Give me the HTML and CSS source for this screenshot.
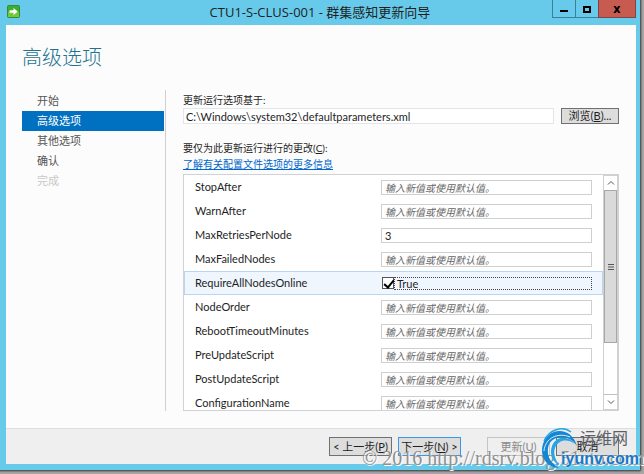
FILE: index.html
```html
<!DOCTYPE html>
<html lang="zh-CN">
<head>
  <meta charset="utf-8">
  <title>CTU1-S-CLUS-001 - 群集感知更新向导</title>
  <link rel="stylesheet" href="styles.css">
</head>
<body>
  <div class="window">
    <header class="titlebar">
      <svg class="app-icon" viewBox="0 0 13 13" aria-hidden="true">
        <rect x="0.5" y="0.5" width="12" height="12" rx="1" fill="#3fae2a" stroke="#2f8f3a"/>
        <rect x="1" y="7" width="11" height="5" fill="#74c83c"/>
        <path d="M2.5 5.2h4V3l4.3 3.5L6.5 10V7.8h-4z" fill="#fff"/>
      </svg>
      <div class="title">CTU1-S-CLUS-001 - 群集感知更新向导</div>
      <div class="caption-buttons">
        <button class="caption" aria-label="最小化"><svg viewBox="0 0 10 10"><path d="M1 6h8v2H1z"/></svg></button>
        <button class="caption" aria-label="最大化"><svg viewBox="0 0 10 10"><path d="M1 2h8v7H1zM3 4v3h4V4z" fill-rule="evenodd"/></svg></button>
        <button class="caption close" aria-label="关闭"><svg viewBox="0 0 10 10"><path d="M1.5 2h2.3L5 3.9 6.2 2h2.3L6.2 5.4 8.6 9H6.2L5 7 3.8 9H1.4l2.4-3.6z"/></svg></button>
      </div>
    </header>

    <div class="client">
      <main class="page">
        <h1>高级选项</h1>
        <div class="columns">
          <nav class="steps">
            <div class="step">开始</div>
            <div class="step active">高级选项</div>
            <div class="step">其他选项</div>
            <div class="step">确认</div>
            <div class="step disabled">完成</div>
          </nav>

          <section class="options">
            <label class="caption-text" for="base">更新运行选项基于:</label>
            <div class="path-row">
              <input class="path" id="base" type="text" value="C:\Windows\system32\defaultparameters.xml" readonly>
              <button class="btn browse">浏览(<u>B</u>)...</button>
            </div>
            <div class="caption-text">要仅为此更新运行进行的更改(<u>C</u>):</div>
            <a class="more" href="#">了解有关配置文件选项的更多信息</a>

            <div class="list">
              <div class="rows">
                <div class="row">
                  <label for="o1">StopAfter</label>
                  <input class="field" id="o1" type="text" placeholder="输入新值或使用默认值。">
                </div>
                <div class="row">
                  <label for="o2">WarnAfter</label>
                  <input class="field" id="o2" type="text" placeholder="输入新值或使用默认值。">
                </div>
                <div class="row">
                  <label for="o3">MaxRetriesPerNode</label>
                  <input class="field number" id="o3" type="text" value="3">
                </div>
                <div class="row">
                  <label for="o4">MaxFailedNodes</label>
                  <input class="field" id="o4" type="text" placeholder="输入新值或使用默认值。">
                </div>
                <div class="row selected">
                  <label for="o5">RequireAllNodesOnline</label>
                  <div class="check">
                    <input class="box" id="o5" type="checkbox" checked>
                    <label class="check-text" for="o5">True</label>
                  </div>
                </div>
                <div class="row">
                  <label for="o6">NodeOrder</label>
                  <input class="field" id="o6" type="text" placeholder="输入新值或使用默认值。">
                </div>
                <div class="row">
                  <label for="o7">RebootTimeoutMinutes</label>
                  <input class="field" id="o7" type="text" placeholder="输入新值或使用默认值。">
                </div>
                <div class="row">
                  <label for="o8">PreUpdateScript</label>
                  <input class="field" id="o8" type="text" placeholder="输入新值或使用默认值。">
                </div>
                <div class="row">
                  <label for="o9">PostUpdateScript</label>
                  <input class="field" id="o9" type="text" placeholder="输入新值或使用默认值。">
                </div>
                <div class="row">
                  <label for="o10">ConfigurationName</label>
                  <input class="field" id="o10" type="text" placeholder="输入新值或使用默认值。">
                </div>
              </div>
              <div class="scrollbar">
                <div class="arrow"><svg viewBox="0 0 8 8"><path d="M1 5.5L4 2.5l3 3"/></svg></div>
                <div class="track">
                  <div class="thumb"><svg viewBox="0 0 8 8"><path d="M1 1.5h6M1 4h6M1 6.5h6"/></svg></div>
                </div>
                <div class="arrow"><svg viewBox="0 0 8 8"><path d="M1 2.5l3 3 3-3"/></svg></div>
              </div>
            </div>
          </section>
        </div>
      </main>

      <footer class="footer">
        <button class="btn">&lt; 上一步(<u>P</u>)</button>
        <button class="btn next">下一步(<u>N</u>) &gt;</button>
        <button class="btn update" disabled>更新(<u>U</u>)</button>
        <button class="btn">取消</button>
      </footer>
    </div>
  </div>

  <div class="watermark">© 2016 http://rdsrv.blog.51cto.com</div>
  <div class="site-logo">
    <svg class="swirl" viewBox="0 0 38 42" aria-hidden="true">
      <path d="M36 19C32 6 22 2 13 5C3 9-1 20 2 30C5 37 11 41 18 41C9 36 6 29 7 21C9 9 26 5 36 19z" fill="#1387d3"/>
      <path d="M34 17C27 8 15 9 11 19C8 27 12 35 18 38C14 32 12 26 14 21C17 13 26 11 34 17z" fill="#26a5e6"/>
      <path d="M3 14C8 3 21-2 30 5" fill="none" stroke="#26a5e6" stroke-width="1.5"/>
      <path d="M3 24C4 11 17 5 29 10" fill="none" stroke="#d8f0fb"/>
    </svg>
    <span class="site-name">运维网</span>
    <span class="site-domain">iyunv.com</span>
  </div>
</body>
</html>
```
FILE: styles.css
```css
* {
  box-sizing: border-box;
}
body {
  margin: 0;
  height: 100vh;
  padding: 0 4px 4px 0;
  overflow: hidden;
  position: relative;
  background: #a8a8a8;
  font-family: Lato, "Noto Sans CJK SC", sans-serif;
  font-size: 11px;
  line-height: 16px;
  color: #1e1e1e;
}
button, input {
  font-family: inherit;
  font-size: inherit;
  line-height: inherit;
  color: inherit;
  margin: 0;
}
.window {
  height: 100%;
  display: flex;
  flex-direction: column;
  padding: 0 4px 6px 6px;
  background: #67caea;
  box-shadow: 0 0 2px 1px #333;
}
.titlebar {
  display: flex;
  align-items: flex-start;
  height: 25px;
  flex: none;
}
.app-icon {
  width: 13px;
  height: 13px;
  margin: 5px 0 0 1px;
}
.title {
  flex: 1;
  padding-left: 68px;
  text-align: center;
  font-family: "Open Sans", "Noto Sans CJK SC", sans-serif;
  font-size: 13px;
  line-height: 24px;
}
.caption-buttons {
  display: flex;
}
.caption {
  width: 23px;
  height: 18px;
  padding: 0;
  display: flex;
  align-items: center;
  justify-content: center;
  background: none;
  border: 1px solid #3c7f98;
  border-top: none;
  border-right: none;
}
.caption svg {
  width: 10px;
  height: 10px;
}
.caption.close {
  width: 38px;
  background: #c75b50;
  border-color: #7d4544;
  border-right: 1px solid #7d4544;
}
.client {
  flex: 1;
  min-height: 0;
  display: flex;
  flex-direction: column;
  background: #fcfcfc;
}
.page {
  flex: 1;
  min-height: 0;
  display: flex;
  flex-direction: column;
  padding: 18px 17px 17px 16px;
}
h1 {
  margin: 0 0 19px;
  font-size: 20px;
  line-height: 28px;
  font-weight: 300;
  color: #1f7391;
}
.columns {
  flex: 1;
  min-height: 0;
  display: flex;
}
.steps {
  width: 144px;
  flex: none;
  padding: 1px 1px 0 0;
  border-right: 1px solid #d0d0d0;
}
.step {
  height: 20px;
  padding-left: 15px;
  line-height: 20px;
  color: #555;
}
.step.active {
  background: #0070c0;
  color: #fff;
}
.step.disabled {
  color: #c8c8c8;
}
.options {
  flex: 1;
  min-width: 0;
  display: flex;
  flex-direction: column;
  padding-left: 17px;
}
.caption-text {
  font-size: 10px;
  line-height: 16px;
  padding-top: 2px;
}
.path-row {
  display: flex;
  gap: 7px;
  margin: 0 0 14px;
}
.path {
  flex: 1;
  min-width: 0;
  height: 16px;
  padding: 0 2px;
  line-height: 14px;
  border: 1px solid #e3e5ea;
  background: #fff;
}
.btn {
  width: 63px;
  height: 19px;
  padding: 0;
  font-size: 11px;
  line-height: 16px;
  white-space: nowrap;
  background: #ddd;
  border: 1px solid #707070;
}
.btn.browse {
  width: 58px;
  height: 16px;
  line-height: 14px;
}
.more {
  align-self: flex-start;
  font-size: 10px;
  line-height: 16px;
  color: #0066cc;
}
.list {
  flex: 1;
  min-height: 0;
  display: flex;
  margin-top: 2px;
  border: 1px solid #d0d2d6;
  background: #fff;
}
.rows {
  flex: 1;
  min-width: 0;
  overflow: hidden;
}
.row {
  height: 24px;
  display: grid;
  grid-template-columns: 186px 1fr;
  align-items: center;
  padding: 0 10px;
  border: 1px solid transparent;
}
.row.selected {
  background: #f0f6fd;
  border-color: #b8d6f4;
}
.field {
  width: 100%;
  height: 15px;
  padding: 0 3px;
  line-height: 13px;
  border: 1px solid #cfcfcf;
  background: #fff;
}
.field::placeholder {
  font-size: 10px;
  font-style: italic;
  color: #666;
  opacity: 1;
}
.check {
  display: flex;
  align-items: center;
  padding-left: 1px;
}
.box {
  appearance: none;
  position: relative;
  width: 12px;
  height: 12px;
  flex: none;
  border: 1px solid #555;
  background: #fff;
}
.box:checked::after {
  content: "";
  position: absolute;
  left: 3px;
  top: 0;
  width: 4px;
  height: 8px;
  border: solid #000;
  border-width: 0 2px 2px 0;
  transform: rotate(40deg);
}
.check-text {
  flex: 1;
  height: 13px;
  padding-left: 2px;
  line-height: 11px;
  border: 1px dotted #444;
}
.scrollbar {
  width: 15px;
  flex: none;
  display: flex;
  flex-direction: column;
  border: 1px solid #d0d0d0;
  background: #fff;
}
.scrollbar svg {
  width: 8px;
  height: 8px;
  fill: none;
  stroke: #555;
}
.arrow {
  height: 14px;
  display: flex;
  align-items: center;
  justify-content: center;
}
.track {
  flex: 1;
  border-bottom: 1px solid #c0c0c0;
}
.thumb {
  height: 75%;
  display: flex;
  align-items: center;
  justify-content: center;
  background: #dadada;
  border: 1px solid #a8a8a8;
}
.footer {
  height: 36px;
  flex: none;
  display: flex;
  justify-content: flex-end;
  align-items: center;
  gap: 6px;
  padding-right: 17px;
  background: #efefef;
  border-top: 1px solid #dedede;
}
.btn.next {
  border-color: #3c96ea;
}
.btn.update {
  margin-left: 20px;
  color: #8a8a8a;
  background: #efefef;
  border-color: #c5c5c5;
}
.watermark {
  position: absolute;
  left: 362px;
  bottom: 4px;
  font-family: "Liberation Serif", serif;
  font-size: 20px;
  line-height: 24px;
  white-space: nowrap;
  color: #909090;
  text-shadow: 1px 1px 0 #fff;
}
.site-logo {
  position: absolute;
  right: 5px;
  bottom: 5px;
  width: 98px;
  height: 42px;
}
.swirl {
  position: absolute;
  left: 0;
  top: 0;
  width: 38px;
  height: 42px;
}
.site-name {
  position: absolute;
  left: 39px;
  top: 1px;
  font-size: 16px;
  line-height: 20px;
  white-space: nowrap;
  color: #5c6068;
}
.site-domain {
  position: absolute;
  right: 0;
  bottom: 0;
  font-family: "Liberation Sans", sans-serif;
  font-size: 16px;
  font-weight: bold;
  line-height: 20px;
  color: #1878c8;
  text-shadow: 0 0 2px #fff;
}
```
